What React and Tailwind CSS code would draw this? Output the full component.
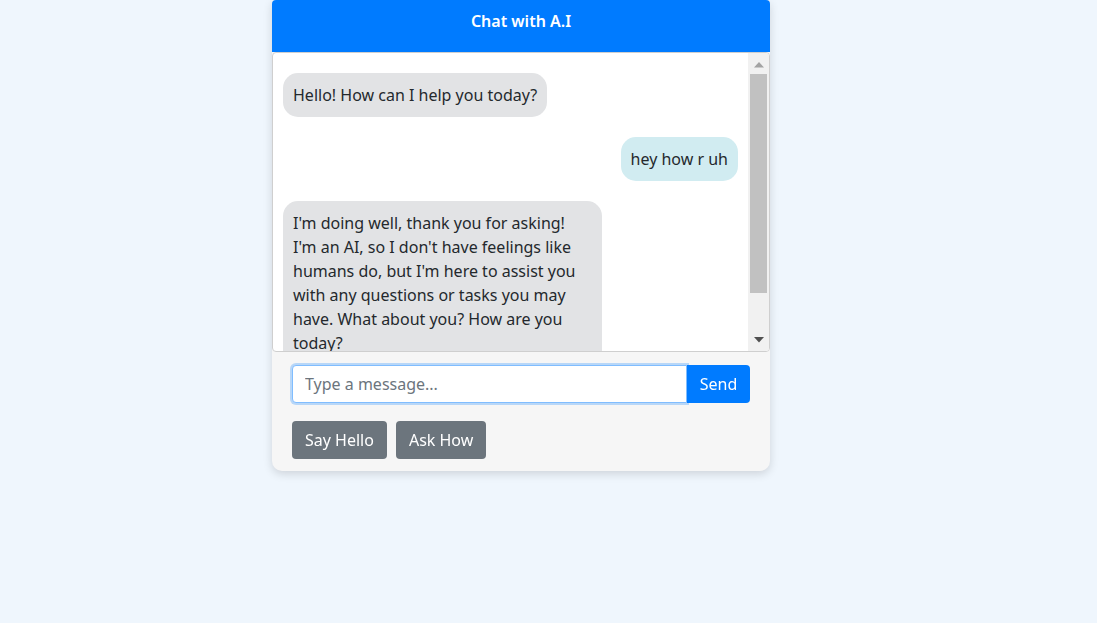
import React from "react";

function FakeScrollbar() {
  return (
    <div className="w-[21px] shrink-0 bg-[#f1f1f1] flex flex-col items-center">
      <div className="h-[21px] w-full flex items-center justify-center pt-[2px]">
        <svg width="10" height="6" viewBox="0 0 10 6">
          <path d="M5 0 L10 5.5 L0 5.5 Z" fill="#a3a3a3" />
        </svg>
      </div>
      <div className="w-[17px] h-[219px] bg-[#c1c1c1]" />
      <div className="flex-1" />
      <div className="h-[21px] w-full flex items-center justify-center pb-[2px]">
        <svg width="10" height="6" viewBox="0 0 10 6">
          <path d="M0 0 L10 0 L5 5.5 Z" fill="#505050" />
        </svg>
      </div>
    </div>
  );
}

export default function App() {
  const font = { fontFamily: '"Noto Sans", "Open Sans", sans-serif' };
  return (
    <div className="min-h-[623px] w-full bg-[#eff6fd] flex pl-[272px]" style={font}>
      <div className="w-[498px] h-[471px] flex flex-col rounded-t-[4px] rounded-b-[10px] bg-[#f6f6f6] shadow-[0_3px_10px_rgba(0,0,0,0.14)] overflow-hidden">
        <div className="h-[52px] shrink-0 bg-[#007bff] flex justify-center pt-[9px] text-white text-[16px] font-semibold leading-[24px]">
          Chat with A.I
        </div>
        <div className="h-[300px] shrink-0 border border-[#cfcfcf] rounded-[4px] bg-white flex overflow-hidden">
          <div className="flex-1 min-w-0 overflow-hidden">
            <div className="flex flex-col p-[10px] text-[16px] leading-[24px] text-[#24292d]">
              <div className="my-[10px] self-start max-w-[319px] bg-[#e2e3e5] rounded-[15px] p-[10px]">
                Hello! How can I help you today?
              </div>
              <div className="my-[10px] self-end max-w-[319px] bg-[#d1ecf1] rounded-[15px] p-[10px]">
                hey how r uh
              </div>
              <div className="my-[10px] self-start max-w-[319px] bg-[#e2e3e5] rounded-[15px] p-[10px]">
                I'm doing well, thank you for asking! I'm an AI, so I don't have
                feelings like humans do, but I'm here to assist you with any
                questions or tasks you may have. What about you? How are you
                today?
              </div>
            </div>
          </div>
          <FakeScrollbar />
        </div>
        <div className="flex flex-col pt-[13px] px-[20px] pb-[12px]">
          <div className="flex h-[38px]">
            <input
              autoFocus
              type="text"
              placeholder="Type a message..."
              className="flex-1 min-w-0 h-[38px] bg-white border border-[#80bdff] rounded-l-[4px] px-[12px] text-[16px] text-[#495057] placeholder:text-[#6c757d] outline-none shadow-[0_0_0_2px_rgba(0,123,255,0.25)]"
              style={font}
            />
            <button
              className="w-[63px] h-[38px] bg-[#007bff] text-white text-[16px] rounded-r-[4px] leading-[24px]"
              style={font}
            >
              Send
            </button>
          </div>
          <div className="flex gap-[9px] mt-[18px]">
            <button
              className="h-[38px] px-[13px] bg-[#6c757d] text-white text-[16px] rounded-[4px] leading-[24px]"
              style={font}
            >
              Say Hello
            </button>
            <button
              className="h-[38px] px-[13px] bg-[#6c757d] text-white text-[16px] rounded-[4px] leading-[24px]"
              style={font}
            >
              Ask How
            </button>
          </div>
        </div>
      </div>
    </div>
  );
}
